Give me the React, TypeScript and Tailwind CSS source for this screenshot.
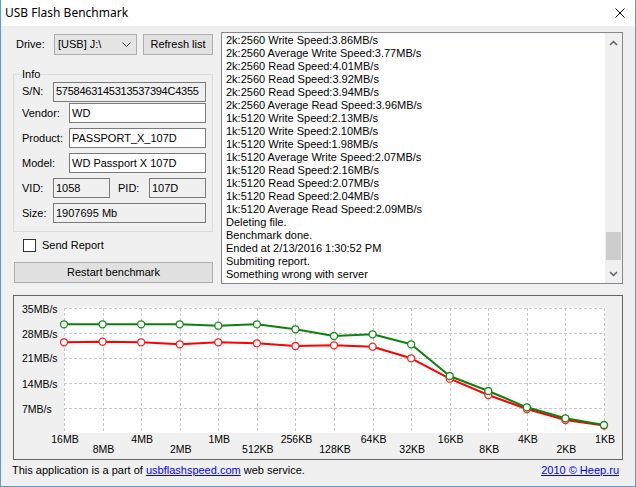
import React from 'react';

const LOG = [
  '2k:2560 Write Speed:3.86MB/s',
  '2k:2560 Average Write Speed:3.77MB/s',
  '2k:2560 Read Speed:4.01MB/s',
  '2k:2560 Read Speed:3.92MB/s',
  '2k:2560 Read Speed:3.94MB/s',
  '2k:2560 Average Read Speed:3.96MB/s',
  '1k:5120 Write Speed:2.13MB/s',
  '1k:5120 Write Speed:2.10MB/s',
  '1k:5120 Write Speed:1.98MB/s',
  '1k:5120 Average Write Speed:2.07MB/s',
  '1k:5120 Read Speed:2.16MB/s',
  '1k:5120 Read Speed:2.07MB/s',
  '1k:5120 Read Speed:2.04MB/s',
  '1k:5120 Average Read Speed:2.09MB/s',
  'Deleting file.',
  'Benchmark done.',
  'Ended at 2/13/2016 1:30:52 PM',
  'Submiting report.',
  'Something wrong with server',
];

const XLABELS = ['16MB', '8MB', '4MB', '2MB', '1MB', '512KB', '256KB', '128KB', '64KB', '32KB', '16KB', '8KB', '4KB', '2KB', '1KB'];
const GREEN = [28.3, 28.3, 28.3, 28.3, 29.7, 28.3, 33.3, 40, 38.3, 48.3, 80, 95, 111.3, 122.3, 129];
const RED = [46.3, 45.7, 46.3, 48.3, 46.3, 47.3, 50, 49.3, 50.7, 62.3, 82.7, 99, 113, 124, 129.5];

function Chart() {
  const xs = XLABELS.map((_, i) => 50 + (i * 540) / 14);
  const font = { fontFamily: '"Liberation Sans", Arial, sans-serif', fontSize: '10.5px' };
  const pts = (arr: number[]) => arr.map((y, i) => `${xs[i]},${y}`).join(' ');
  return (
    <svg width={608} height={163} className="block">
      <rect x={50} y={11} width={541} height={126} fill="#ffffff" />
      {[12, 37, 62, 87, 112].map((y) => (
        <line key={y} x1={50} x2={591} y1={y + 0.5} y2={y + 0.5} stroke="#c8c8c8" strokeWidth={1} strokeDasharray="3 2" />
      ))}
      {xs.map((x, i) => (
        <line key={i} x1={Math.round(x) + 0.5} x2={Math.round(x) + 0.5} y1={12} y2={137} stroke="#c8c8c8" strokeWidth={1} strokeDasharray="3 2" />
      ))}
      {[
        ['35MB/s', 13],
        ['28MB/s', 38],
        ['21MB/s', 62],
        ['14MB/s', 88],
        ['7MB/s', 113],
      ].map(([t, y]) => (
        <text key={t as string} x={8} y={y as number} dominantBaseline="central" fill="#000" style={font}>
          {t}
        </text>
      ))}
      {XLABELS.map((t, i) => (
        <text key={t} x={xs[i] + 1} y={i % 2 === 0 ? 143 : 153} textAnchor="middle" dominantBaseline="central" fill="#000" style={font}>
          {t}
        </text>
      ))}
      <polyline points={pts(RED)} fill="none" stroke="#ff0000" strokeWidth={2} strokeLinejoin="round" />
      {RED.map((y, i) => (
        <circle key={i} cx={xs[i]} cy={y} r={3.5} fill="#ffffff" stroke="#ff2020" strokeWidth={1.3} />
      ))}
      <polyline points={pts(GREEN)} fill="none" stroke="#0d800d" strokeWidth={2} strokeLinejoin="round" />
      {GREEN.map((y, i) => (
        <circle key={i} cx={xs[i]} cy={y} r={3.5} fill="#ffffff" stroke="#1a8a1a" strokeWidth={1.3} />
      ))}
    </svg>
  );
}

function Chevron({ up }: { up?: boolean }) {
  return (
    <svg width={9} height={6} viewBox="0 0 9 6">
      <path d={up ? 'M1 5 L4.5 1.5 L8 5' : 'M1 1 L4.5 4.5 L8 1'} fill="none" stroke="#606060" strokeWidth={1.5} />
    </svg>
  );
}

export default function App() {
  const boxRO = 'h-[20px] border border-[#7a7a7a] bg-[#f0f0f0] pl-[2px] flex items-center whitespace-nowrap overflow-hidden';
  const boxW = 'h-[20px] border border-[#7a7a7a] bg-white pl-[2px] flex items-center whitespace-nowrap overflow-hidden';
  return (
    <div
      className="w-[636px] h-[487px] flex flex-col border-x border-b border-[#5b9bd5] bg-[#f0f0f0] text-[11px] leading-[13px] text-black overflow-hidden"
      style={{ fontFamily: '"Liberation Sans", Arial, sans-serif' }}
    >
      {/* Title bar */}
      <div className="h-[26px] bg-white flex items-center justify-between pl-[4px] pr-[10px] shrink-0">
        <span className="text-[12px] leading-[16px] text-black" style={{ fontFamily: '"Noto Sans", "Open Sans", sans-serif' }}>
          USB Flash Benchmark
        </span>
        <svg width={10} height={10} viewBox="0 0 10 10">
          <path d="M0.5 0.5 L9.5 9.5 M9.5 0.5 L0.5 9.5" stroke="#000" strokeWidth={1} />
        </svg>
      </div>

      {/* Body */}
      <div className="flex-1 flex flex-col pl-[12px] pr-[12px] pt-[6px]">
        <div className="flex gap-[8px]">
          {/* Left column */}
          <div className="w-[200px] flex flex-col">
            <div className="flex items-center mt-[2px] h-[21px]">
              <span className="ml-[3px] w-[38px]">Drive:</span>
              <div className="w-[83px] h-[21px] border border-[#acacac] bg-[#e5e5e5] flex items-center justify-between pl-[3px] pr-[5px]">
                <span>[USB] J:\</span>
                <svg width={9} height={5} viewBox="0 0 9 5">
                  <path d="M0.5 0.5 L4.5 4.5 L8.5 0.5" fill="none" stroke="#333" strokeWidth={1} />
                </svg>
              </div>
              <div className="ml-[6px] w-[70px] h-[21px] border border-[#adadad] bg-[#e1e1e1] flex items-center justify-center">
                Refresh list
              </div>
            </div>

            <fieldset className="mt-[13px] border border-[#dcdcdc] pl-[7px] pb-[8px] rounded-none">
              <legend className="px-[1px] leading-[13px]">Info</legend>
              <div className="flex items-center h-[19px] mt-[1px] ml-[1px]">
                <span className="w-[31px]">S/N:</span>
                <div className={boxRO + ' w-[153px] h-[19px] tracking-[-0.25px]'}>5758463145313537394C4355</div>
              </div>
              <div className="flex items-center h-[20px] mt-[2px] ml-[1px]">
                <span className="w-[47px]">Vendor:</span>
                <div className={boxW + ' w-[137px]'}>WD</div>
              </div>
              <div className="flex items-center h-[20px] mt-[5px] ml-[1px]">
                <span className="w-[47px]">Product:</span>
                <div className={boxW + ' w-[137px]'}>PASSPORT_X_107D</div>
              </div>
              <div className="flex items-center h-[20px] mt-[5px] ml-[1px]">
                <span className="w-[47px]">Model:</span>
                <div className={boxW + ' w-[137px]'}>WD Passport X 107D</div>
              </div>
              <div className="flex items-center h-[20px] mt-[5px] ml-[1px]">
                <span className="w-[31px]">VID:</span>
                <div className={boxRO + ' w-[57px]'}>1058</div>
                <span className="ml-[8px] w-[31px]">PID:</span>
                <div className={boxRO + ' w-[57px]'}>107D</div>
              </div>
              <div className="flex items-center h-[20px] mt-[5px] ml-[1px]">
                <span className="w-[31px]">Size:</span>
                <div className={boxRO + ' w-[153px]'}>1907695 Mb</div>
              </div>
            </fieldset>

            <div className="flex items-center mt-[6px] ml-[10px] h-[14px]">
              <div className="w-[13px] h-[13px] border border-[#333333] bg-white" />
              <span className="ml-[6px]">Send Report</span>
            </div>

            <div className="mt-[10px] ml-[1px] w-[199px] h-[21px] border border-[#adadad] bg-[#e1e1e1] flex items-center justify-center">
              Restart benchmark
            </div>
          </div>

          {/* Log list */}
          <div className="w-[402px] h-[252px] border border-[#828790] bg-white flex">
            <div className="flex-1 overflow-hidden pl-[4px] pt-[1px] whitespace-nowrap">
              {LOG.map((l, i) => (
                <div key={i} className="h-[13px] leading-[13px]">
                  {l}
                </div>
              ))}
            </div>
            <div className="w-[17px] bg-[#f0f0f0] flex flex-col">
              <div className="h-[17px] flex items-center justify-center pt-[2px]">
                <Chevron up />
              </div>
              <div className="flex-1 flex flex-col justify-end pb-[6px] px-[1px]">
                <div className="h-[28px] bg-[#cdcdcd]" />
              </div>
              <div className="h-[17px] flex items-center justify-center pb-[2px]">
                <Chevron />
              </div>
            </div>
          </div>
        </div>

        {/* Chart panel */}
        <div className="mt-[11px] w-[610px] h-[165px] border border-[#646464] bg-[#f0f0f0]">
          <Chart />
        </div>

        {/* Footer */}
        <div className="mt-[4px] flex justify-between pl-[-1px] -ml-[1px] pr-[4px]">
          <span>
            This application is a part of <span className="text-[#0000ff] underline">usbflashspeed.com</span> web service.
          </span>
          <span className="text-[#0000ff] underline">2010 © Heep.ru</span>
        </div>
      </div>
    </div>
  );
}
